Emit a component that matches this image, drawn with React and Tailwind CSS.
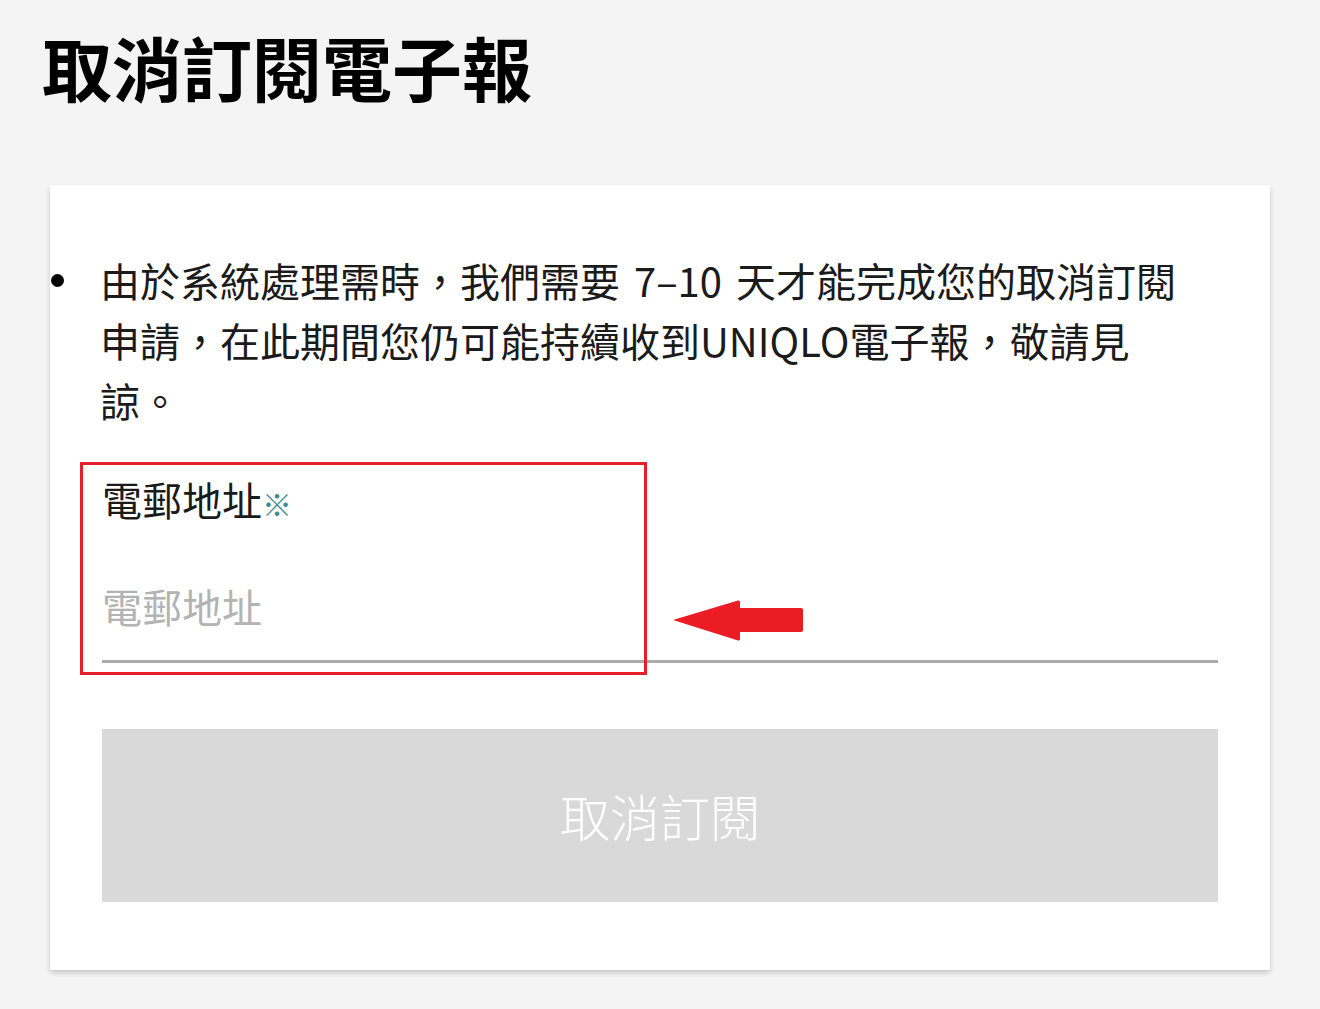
export default function App() {
  const font = { fontFamily: '"Noto Sans CJK TC", "Noto Sans", sans-serif' };
  return (
    <div className="min-h-[1009px] bg-[#f4f4f4] px-[42px] pt-[17px] pb-[40px]" style={font}>
      <h1 className="text-[70px] font-bold leading-[100px] text-black">取消訂閱電子報</h1>

      <div className="relative mt-[68px] ml-[8px] w-[1220px] bg-white px-[52px] pt-[65px] pb-[68px] shadow-[0_3px_5px_rgba(0,0,0,0.18)]">
        <ul className="text-[40px] leading-[60px] text-[#1b1b1b]">
          <li className="-ml-[52px] flex">
            <span className="flex h-[60px] w-[50px] shrink-0 items-center">
              <span className="ml-[1px] h-[13px] w-[13px] rounded-full bg-black" />
            </span>
            <p className="max-w-[1092px] [word-spacing:5px]">
              由於系統處理需時，我們需要 7–10 天才能完成您的取消訂閱申請，在此期間您仍可能持續收到UNIQLO電子報，敬請見諒。
            </p>
          </li>
        </ul>

        <div className="mt-[39px]">
          <label className="block text-[40px] leading-[60px] text-[#1b1b1b]">
            電郵地址<span className="text-[30px] font-bold text-[#3d8b93]">※</span>
          </label>
          <input
            type="email"
            placeholder="電郵地址"
            className="mt-[21px] block h-[109px] w-full border-b-[3px] border-[#ababab] bg-transparent pb-[2px] text-[40px] text-[#1b1b1b] outline-none placeholder:text-[#b3b3b3]"
          />
        </div>

        <button
          type="button"
          disabled
          className="mt-[66px] flex h-[173px] w-full items-center justify-center bg-[#d9d9d9] text-[50px] font-light text-white"
        >
          取消訂閱
        </button>

        {/* annotation: red outline round the email field */}
        <div className="pointer-events-none absolute left-[30px] top-[277px] h-[213px] w-[567px] border-[3px] border-[#e5202a]" />
        <svg
          className="pointer-events-none absolute left-[621px] top-[414px]"
          width="134"
          height="44"
          viewBox="0 0 134 44"
        >
          <path
            d="M2 21 L67 1.5 Q69 1 69 3 L69 9 L130 9 Q132 9 132 11 L132 31 Q132 33 130 33 L69 33 L69 40 Q69 42 67 41.5 Z"
            fill="#ec1c24"
          />
        </svg>
      </div>
    </div>
  );
}
